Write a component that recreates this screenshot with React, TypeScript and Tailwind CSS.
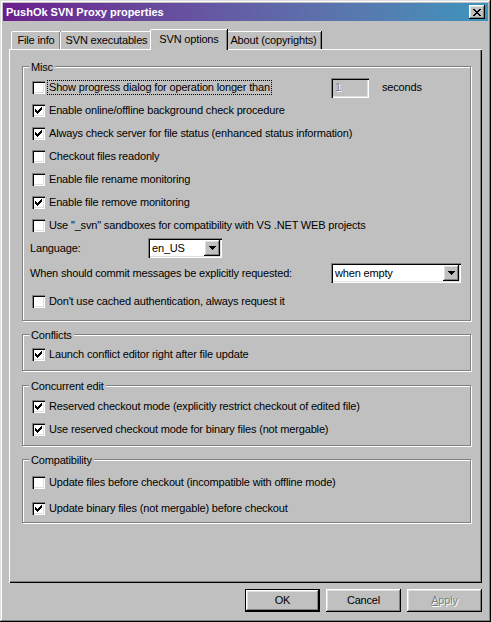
import React from "react";

const raised =
  "shadow-[inset_-1px_-1px_0_#000,inset_1px_1px_0_#fff,inset_-2px_-2px_0_#808080,inset_2px_2px_0_#dfdfdf]";
const sunken =
  "shadow-[inset_1px_1px_0_#808080,inset_2px_2px_0_#000,inset_-1px_-1px_0_#fff,inset_-2px_-2px_0_#dfdfdf]";

function Check({ on }: { on?: boolean }) {
  return (
    <span className={`w-[13px] h-[13px] shrink-0 bg-white ${sunken}`}>
      {on && (
        <svg width="13" height="13" viewBox="0 0 13 13" shapeRendering="crispEdges">
          <path d="M3 5h1v3H3zM4 6h1v3H4zM5 7h1v3H5zM6 6h1v3H6zM7 5h1v3H7zM8 4h1v3H8zM9 3h1v3H9z" fill="#000" />
        </svg>
      )}
    </span>
  );
}

function Row({ on, label, className = "" }: { on?: boolean; label: React.ReactNode; className?: string }) {
  return (
    <div className={`h-[23px] flex items-center gap-[4px] pl-[9px] ${className}`}>
      <Check on={on} />
      <span className="whitespace-nowrap">{label}</span>
    </div>
  );
}

function Group({ title, className = "", children }: { title: string; className?: string; children: React.ReactNode }) {
  return (
    <div className={`border border-[#808080] shadow-[inset_1px_1px_0_#fff,1px_1px_0_#fff] flex flex-col shrink-0 ${className}`}>
      <span className="-mt-[7px] ml-[6px] px-[2px] self-start bg-[#c0c0c0] leading-[14px]">{title}</span>
      {children}
    </div>
  );
}

function Arrow() {
  return (
    <span className={`w-[16px] h-[16px] bg-[#c0c0c0] flex items-center justify-center ${raised}`}>
      <svg width="7" height="4" viewBox="0 0 7 4" shapeRendering="crispEdges">
        <path d="M0 0h7v1H0zM1 1h5v1H1zM2 2h3v1H2zM3 3h1v1H3z" fill="#000" />
      </svg>
    </span>
  );
}

function Combo({ value, className = "" }: { value: string; className?: string }) {
  return (
    <div className={`h-[20px] bg-white flex items-center justify-between pl-[4px] pr-[2px] ${sunken} ${className}`}>
      <span>{value}</span>
      <Arrow />
    </div>
  );
}

function Tab({ label, className = "" }: { label: string; className?: string }) {
  return (
    <div
      className={`h-[18px] mt-[2px] flex items-center justify-center bg-[#c0c0c0] border-t border-l border-white shadow-[inset_-1px_0_0_#808080,1px_0_0_#000] rounded-tl-[2px] ${className}`}
    >
      {label}
    </div>
  );
}

function Button({ children, def, disabled }: { children: React.ReactNode; def?: boolean; disabled?: boolean }) {
  return (
    <div className={`w-[75px] h-[23px] ${def ? "border border-black" : ""}`}>
      <div className={`w-full h-full flex items-center justify-center bg-[#c0c0c0] ${raised}`}>
        <span className={disabled ? "text-[#808080] [text-shadow:1px_1px_0_#fff]" : ""}>{children}</span>
      </div>
    </div>
  );
}

export default function App() {
  return (
    <div
      className="w-[491px] h-[622px] bg-[#c0c0c0] p-[3px] flex flex-col text-[11px] tracking-[-0.17px] text-black shadow-[inset_-1px_-1px_0_#000,inset_1px_1px_0_#dfdfdf,inset_-2px_-2px_0_#808080,inset_2px_2px_0_#fff]"
      style={{ fontFamily: '"Liberation Sans", Arial, sans-serif' }}
    >
      {/* title bar */}
      <div className="h-[18px] flex items-center justify-between bg-gradient-to-r from-[#6a1e8e] to-[#3a95bc] pl-[3px] pr-[3px]">
        <span className="text-white font-bold text-[11px] tracking-normal">PushOk SVN Proxy properties</span>
        <span className={`w-[16px] h-[14px] bg-[#c0c0c0] flex items-center justify-center ${raised}`}>
          <svg width="8" height="7" viewBox="0 0 8 7" shapeRendering="crispEdges">
            <path d="M0 0h2v1H0zM6 0h2v1H6zM1 1h2v1H1zM5 1h2v1H5zM2 2h4v1H2zM3 3h2v1H3zM2 4h4v1H2zM1 5h2v1H1zM5 5h2v1H5zM0 6h2v1H0zM6 6h2v1H6z" fill="#000" />
          </svg>
        </span>
      </div>

      {/* tabs */}
      <div className="mt-[8px] ml-[6px] pl-[2px] h-[20px] flex items-start">
        <Tab label="File info" className="w-[49px]" />
        <Tab label="SVN executables" className="w-[92px]" />
        <div className="relative z-10 -ml-[2px] -mr-[2px] h-[21px] w-[77px] flex items-center justify-center bg-[#c0c0c0] border-t border-l border-white shadow-[inset_-1px_0_0_#808080,1px_0_0_#000] rounded-tl-[2px] pb-[2px]">
          SVN options
        </div>
        <Tab label="About (copyrights)" className="w-[96px]" />
      </div>

      {/* panel */}
      <div className="mx-[6px] h-[534px] flex flex-col pl-[13px] pr-[11px] shadow-[inset_1px_1px_0_#fff,inset_-1px_-1px_0_#000,inset_-2px_-2px_0_#808080]">
        <Group title="Misc" className="mt-[17px] h-[255px]">
          <div className="mt-[2px] h-[23px] flex items-center pl-[9px]">
            <div className="w-[299px] flex items-center gap-[2px]">
              <Check />
              <span className="whitespace-nowrap border border-dotted border-black px-[1px] leading-[13px]">
                Show progress dialog for operation longer than
              </span>
            </div>
            <div className={`w-[38px] h-[20px] flex items-center pl-[4px] ${sunken}`}>
              <span className="text-[#808080] [text-shadow:1px_1px_0_#fff]">1</span>
            </div>
            <span className="ml-[13px]">seconds</span>
          </div>
          <Row on label="Enable online/offline background check procedure" />
          <Row on label="Always check server for file status (enhanced status information)" />
          <Row label="Checkout files readonly" />
          <Row label="Enable file rename monitoring" />
          <Row on label="Enable file remove monitoring" />
          <Row label={'Use "_svn" sandboxes for compatibility with VS .NET WEB projects'} />
          <div className="mt-[1px] h-[20px] flex items-center pl-[7px]">
            <span className="w-[118px]">Language:</span>
            <Combo value="en_US" className="w-[74px]" />
          </div>
          <div className="mt-[5px] h-[20px] flex items-center pl-[7px]">
            <span className="w-[301px] whitespace-nowrap">When should commit messages be explicitly requested:</span>
            <Combo value="when empty" className="w-[130px]" />
          </div>
          <Row className="mt-[7px]" label="Don't use cached authentication, always request it" />
        </Group>

        <Group title="Conflicts" className="mt-[13px] h-[37px]">
          <Row className="mt-[1px]" on label="Launch conflict editor right after file update" />
        </Group>

        <Group title="Concurrent edit" className="mt-[14px] h-[61px]">
          <Row className="mt-[2px]" on label="Reserved checkout mode (explicitly restrict checkout of edited file)" />
          <Row on label="Use reserved checkout mode for binary files (not mergable)" />
        </Group>

        <Group title="Compatibility" className="mt-[13px] h-[64px]">
          <Row className="mt-[4px]" label="Update files before checkout (incompatible with offline mode)" />
          <Row className="mt-[3px]" on label="Update binary files (not mergable) before checkout" />
        </Group>
      </div>

      {/* buttons */}
      <div className="mt-[6px] mr-[6px] flex justify-end gap-[6px]">
        <Button def>OK</Button>
        <Button>Cancel</Button>
        <Button disabled>
          <span className="underline">A</span>pply
        </Button>
      </div>
    </div>
  );
}
